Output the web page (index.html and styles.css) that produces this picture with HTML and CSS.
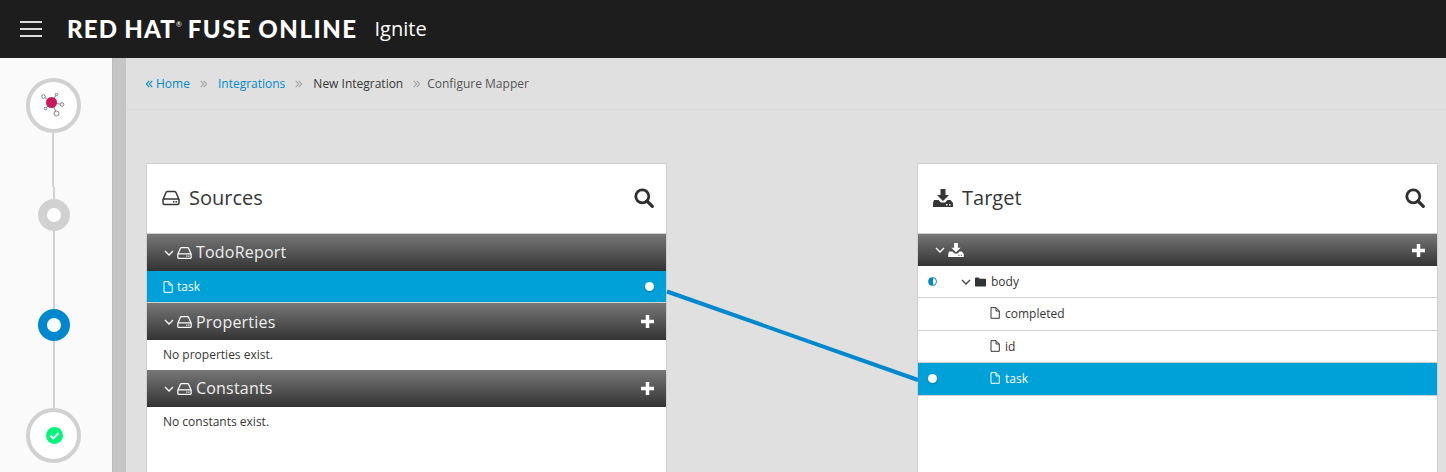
FILE: index.html
```html
<!DOCTYPE html>
<html lang="en">
<head>
    <meta charset="UTF-8">
    <title>Configure Mapper</title>
    <link rel="stylesheet" href="styles.css">
</head>
<body>
    <svg width="0" height="0" class="defs">
        <symbol id="drive" viewBox="0 0 18 16">
            <path d="M1 9.5 L4 2.5 Q4.3 1.5 5.5 1.5 H12.5 Q13.700 1.5 14 2.500 L17 9.500 V13 Q17 14.500 15.500 14.500 H2.500 Q1 14.500 1 13 Z M1 9 H17" fill="none" stroke="currentColor" stroke-width="1.500"/>
            <rect x="11" y="11" width="1.500" height="1.500" fill="currentColor"/>
            <rect x="13.500" y="11" width="1.500" height="1.500" fill="currentColor"/>
        </symbol>
        <symbol id="download" viewBox="0 0 20 18">
            <path d="M7.500 0 H12.500 V6 H16 L10 12 L4 6 H7.500 Z" fill="currentColor"/>
            <path fill-rule="evenodd" d="M1 11 H5.500 L8 13.500 H12 L14.500 11 H17.500 L20 14 V18 H0 V14 Z M13 15 V16.500 H14.500 V15 Z M16 15 V16.500 H17.500 V15 Z" fill="currentColor"/>
        </symbol>
        <symbol id="file" viewBox="0 0 10 12">
            <path d="M1 .7 H6 L9.300 4 V11.300 H1 Z M6 .7 V4 H9.300" fill="none" stroke="currentColor" stroke-width="1"/>
        </symbol>
        <symbol id="search" viewBox="0 0 20 20">
            <circle cx="8.300" cy="8.300" r="6.500" fill="none" stroke="currentColor" stroke-width="2.800"/>
            <path d="M13 13 L18.300 18.300" stroke="currentColor" stroke-width="3.200" stroke-linecap="round"/>
        </symbol>
        <symbol id="chevron" viewBox="0 0 10 6">
            <path d="M1 1 L5 5 L9 1" fill="none" stroke="currentColor" stroke-width="1.300"/>
        </symbol>
        <symbol id="plus" viewBox="0 0 12 12">
            <path d="M4.400 0 H7.600 V4.400 H12 V7.600 H7.600 V12 H4.400 V7.600 H0 V4.400 H4.400 Z" fill="currentColor"/>
        </symbol>
        <symbol id="angles" viewBox="0 0 7 8">
            <path d="M.7 .8 L3.600 4 L.7 7.200 M3.700 .8 L6.600 4 L3.700 7.200" fill="none" stroke="currentColor" stroke-width="1.100"/>
        </symbol>
    </svg>

    <header class="topbar">
        <div class="burger"><span></span><span></span><span></span></div>
        <div class="brand">RED HAT<sup>®</sup> <span class="brand-product">FUSE ONLINE</span></div>
        <div class="app-name">Ignite</div>
    </header>

    <div class="layout">
        <nav class="steps">
            <div class="step-big">
                <svg width="26" height="26" viewBox="0 0 26 26">
                    <g stroke="#666" stroke-width=".8" fill="#fff">
                        <path d="M4 4 L11.500 9.500 M16.500 1.500 L11.500 9.500 M22 11.500 L11.500 9.500 M5.500 15.500 L11.500 9.500 M16.500 20 L11.500 9.500"/>
                        <circle cx="3.500" cy="3.500" r="1.800"/>
                        <circle cx="16.500" cy="1.500" r="1.300"/>
                        <circle cx="22" cy="11.500" r="1.800"/>
                        <circle cx="5.500" cy="15.500" r="1.300"/>
                        <circle cx="16.500" cy="20.500" r="2.500"/>
                    </g>
                    <circle cx="11.500" cy="9.500" r="5.500" fill="#c9195f"/>
                </svg>
            </div>
            <div class="step-line line-a"></div>
            <div class="step-line line-a2"></div>
            <div class="step-dot"></div>
            <div class="step-line line-b"></div>
            <div class="step-dot active"></div>
            <div class="step-line line-c"></div>
            <div class="step-big">
                <svg class="step-check" width="17" height="17" viewBox="0 0 17 17">
                    <circle cx="8.500" cy="8.500" r="8.500" fill="#00f57a"/>
                    <path d="M4.500 8.700 L7.300 11.400 L12.500 6" fill="none" stroke="#fff" stroke-width="2"/>
                </svg>
            </div>
        </nav>
        <div class="divider"></div>

        <main class="content">
            <div class="breadcrumb">
                <a class="crumb-first"><svg class="angles flip" width="7" height="8"><use href="#angles"/></svg>Home</a>
                <svg class="angles sep" width="7" height="8"><use href="#angles"/></svg>
                <a>Integrations</a>
                <svg class="angles sep" width="7" height="8"><use href="#angles"/></svg>
                <span class="crumb-dark">New Integration</span>
                <svg class="angles sep last" width="7" height="8"><use href="#angles"/></svg>
                <span class="crumb-light">Configure Mapper</span>
            </div>

            <div class="panels">
                <section class="panel">
                    <div class="panel-head">
                        <svg class="head-icon" width="18" height="16"><use href="#drive"/></svg>
                        <h2>Sources</h2>
                        <svg class="search" width="20" height="20"><use href="#search"/></svg>
                    </div>
                    <div class="doc-head">
                        <svg class="chev" width="10" height="6"><use href="#chevron"/></svg>
                        <svg class="doc-icon" width="15" height="14"><use href="#drive"/></svg>
                        <span>TodoReport</span>
                    </div>
                    <div class="src-row selected">
                        <svg class="file" width="10" height="12"><use href="#file"/></svg>
                        <span>task</span>
                        <i class="port"></i>
                    </div>
                    <div class="doc-head props">
                        <svg class="chev" width="10" height="6"><use href="#chevron"/></svg>
                        <svg class="doc-icon" width="15" height="14"><use href="#drive"/></svg>
                        <span>Properties</span>
                        <svg class="plus" width="13" height="13"><use href="#plus"/></svg>
                    </div>
                    <p class="empty">No properties exist.</p>
                    <div class="doc-head">
                        <svg class="chev" width="10" height="6"><use href="#chevron"/></svg>
                        <svg class="doc-icon" width="15" height="14"><use href="#drive"/></svg>
                        <span>Constants</span>
                        <svg class="plus" width="13" height="13"><use href="#plus"/></svg>
                    </div>
                    <p class="empty">No constants exist.</p>
                </section>

                <section class="panel">
                    <div class="panel-head">
                        <svg class="head-icon" width="20" height="18"><use href="#download"/></svg>
                        <h2>Target</h2>
                        <svg class="search" width="20" height="20"><use href="#search"/></svg>
                    </div>
                    <div class="doc-head short">
                        <svg class="chev" width="10" height="6"><use href="#chevron"/></svg>
                        <svg class="doc-icon" width="16" height="14"><use href="#download"/></svg>
                        <svg class="plus" width="13" height="13"><use href="#plus"/></svg>
                    </div>
                    <div class="tgt-row parent">
                        <i class="half"></i>
                        <svg class="chev" width="10" height="6"><use href="#chevron"/></svg>
                        <svg class="folder" width="11" height="10" viewBox="0 0 12 10"><path d="M0 1 Q0 0 1 0 H4 L5 1.500 H11 Q12 1.500 12 2.500 V9 Q12 10 11 10 H1 Q0 10 0 9 Z" fill="#333"/></svg>
                        <span>body</span>
                    </div>
                    <div class="tgt-row tall">
                        <svg class="file" width="10" height="12"><use href="#file"/></svg>
                        <span>completed</span>
                    </div>
                    <div class="tgt-row">
                        <svg class="file" width="10" height="12"><use href="#file"/></svg>
                        <span>id</span>
                    </div>
                    <div class="tgt-row tall selected">
                        <i class="port"></i>
                        <svg class="file" width="10" height="12"><use href="#file"/></svg>
                        <span>task</span>
                    </div>
                </section>
            </div>
        </main>
    </div>

    <!-- mapping line over the panels -->
    <svg class="mapping" width="1446" height="472">
        <line x1="667" y1="291.500" x2="918" y2="380" stroke="#0088ce" stroke-width="4"/>
    </svg>
</body>
</html>
```

FILE: styles.css
```css
html, body {
    height: 100%;
}
body {
    margin: 0;
    font-family: "Open Sans", sans-serif;
    font-size: 12px;
    color: #363636;
    overflow: hidden;
    position: relative;
}
.defs {
    position: absolute;
}
.topbar {
    height: 58px;
    box-sizing: border-box;
    padding: 0 0 2px 20px;
    background: #1d1d1d;
    color: #fff;
    display: flex;
    align-items: center;
}
.burger {
    width: 22px;
    display: flex;
    flex-direction: column;
    gap: 5px;
    margin: 2px 25px 0 0;
}
.burger span {
    height: 2px;
    background: #ddd;
}
.brand {
    font-family: Lato, sans-serif;
    font-weight: 900;
    font-size: 24px;
    letter-spacing: 1.2px;
    word-spacing: -1px;
    white-space: nowrap;
}
.brand-product {
    letter-spacing: 1.5px;
}
.brand sup {
    font-size: 7px;
    font-weight: 400;
    vertical-align: 11px;
    line-height: 0;
    margin: 0;
    letter-spacing: 0;
}
.app-name {
    font-size: 20px;
    margin-left: 17px;
}
.layout {
    display: flex;
    height: 414px;
}
.steps {
    width: 113px;
    background: #fafafa;
    border-right: 1px solid #bbb;
    box-sizing: border-box;
    flex: none;
    display: flex;
    flex-direction: column;
    align-items: center;
    padding-top: 20px;
}
.step-big {
    width: 55px;
    height: 55px;
    box-sizing: border-box;
    border: 4px solid #d1d1d1;
    border-radius: 50%;
    background: #fff;
    display: flex;
    align-items: center;
    justify-content: center;
    flex: none;
    margin-right: 6px;
}
.step-check {
    margin-left: 2px;
}
.step-dot {
    width: 32px;
    height: 32px;
    box-sizing: border-box;
    border: 9px solid #d1d1d1;
    border-radius: 50%;
    background: #fff;
    flex: none;
    margin-left: -5px;
}
.step-dot.active {
    border-color: #0088ce;
}
.step-line {
    width: 2px;
    background: #d1d1d1;
    flex: none;
    margin-left: -5px;
}
.line-a {
    height: 54px;
    margin-left: -7px;
}
.line-a2 {
    height: 12px;
}
.line-b {
    height: 78px;
}
.line-c {
    height: 67px;
}
.divider {
    width: 13px;
    flex: none;
    background: #c5c5c5;
}
.content {
    flex: 1;
    background: #e0e0e0;
}
.breadcrumb {
    height: 52px;
    box-sizing: border-box;
    border-bottom: 1px solid #d9d9d9;
    padding: 17px 0 0 20px;
    display: flex;
    align-items: flex-start;
    gap: 10px;
    line-height: 17px;
    white-space: nowrap;
}
.breadcrumb a {
    color: #0088ce;
}
.crumb-dark {
    color: #363636;
}
.crumb-light {
    color: #555;
}
.angles {
    display: inline-block;
}
.flip {
    transform: scaleX(-1);
    margin-right: 3px;
}
.sep {
    color: #a3a3a3;
    margin: 5px 1px 0 0;
}
.sep.last {
    margin-right: -3px;
}
.panels {
    display: flex;
    justify-content: space-between;
    padding: 53px 8px 0 20px;
}
.panel {
    width: 521px;
    height: 320px;
    box-sizing: border-box;
    background: #fff;
    border: 1px solid #cfcfcf;
    border-bottom: none;
}
.panel-head {
    height: 70px;
    box-sizing: border-box;
    border-bottom: 1px solid #d1d1d1;
    display: flex;
    align-items: center;
    padding: 0 12px 2px 15px;
}
.panel-head h2 {
    margin: 0 0 0 9px;
    font-size: 20px;
    font-weight: 400;
    flex: 1;
    color: #363636;
}
.head-icon {
    color: #363636;
}
.search {
    color: #2f2f2f;
}
.doc-head {
    height: 37px;
    background: linear-gradient(#777, #333);
    color: #fff;
    display: flex;
    align-items: center;
    padding: 0 12px 0 17px;
    font-size: 16px;
}
.doc-head.short {
    height: 32px;
}
.doc-head span {
    flex: 1;
    margin-left: 4px;
    letter-spacing: 0.2px;
    color: #eee;
    padding-bottom: 1px;
}
.doc-head.props span {
    padding-bottom: 0;
}
.doc-head .chev {
    margin-right: 3px;
}
.doc-head.short .doc-icon {
    margin-right: auto;
}
.src-row {
    height: 31px;
    display: flex;
    align-items: center;
    padding: 0 12px 0 16px;
    border-bottom: 1px solid #d1d1d1;
}
.src-row span {
    margin-left: 4px;
    flex: 1;
}
.selected {
    background: #00a1d9;
    color: #fff;
    border-bottom-color: #d1d1d1;
}
.port {
    width: 9px;
    height: 9px;
    border-radius: 50%;
    background: #fff;
    box-shadow: 0 1px 2px rgba(0, 0, 0, 0.25);
}
.empty {
    margin: 0;
    height: 30px;
    line-height: 29px;
    padding-left: 16px;
}
.tgt-row {
    height: 32px;
    box-sizing: border-box;
    border-bottom: 1px solid #d1d1d1;
    display: flex;
    align-items: center;
    padding: 0 0 1px 72px;
    position: relative;
}
.tgt-row.tall {
    height: 33px;
    padding-bottom: 2px;
}
.tgt-row span {
    margin-left: 5px;
}
.tgt-row.parent {
    padding: 0 0 0 43px;
}
.parent .chev {
    margin-right: 4px;
    color: #444;
}
.tgt-row .port, .half {
    position: absolute;
    left: 10px;
    top: 11px;
}
.half {
    width: 9px;
    height: 9px;
    box-sizing: border-box;
    border-radius: 50%;
    border: 1px solid #0088ce;
    background: linear-gradient(90deg, #0088ce 55%, #fff 55%);
}
.mapping {
    position: absolute;
    left: 0;
    top: 0;
    pointer-events: none;
}
```
